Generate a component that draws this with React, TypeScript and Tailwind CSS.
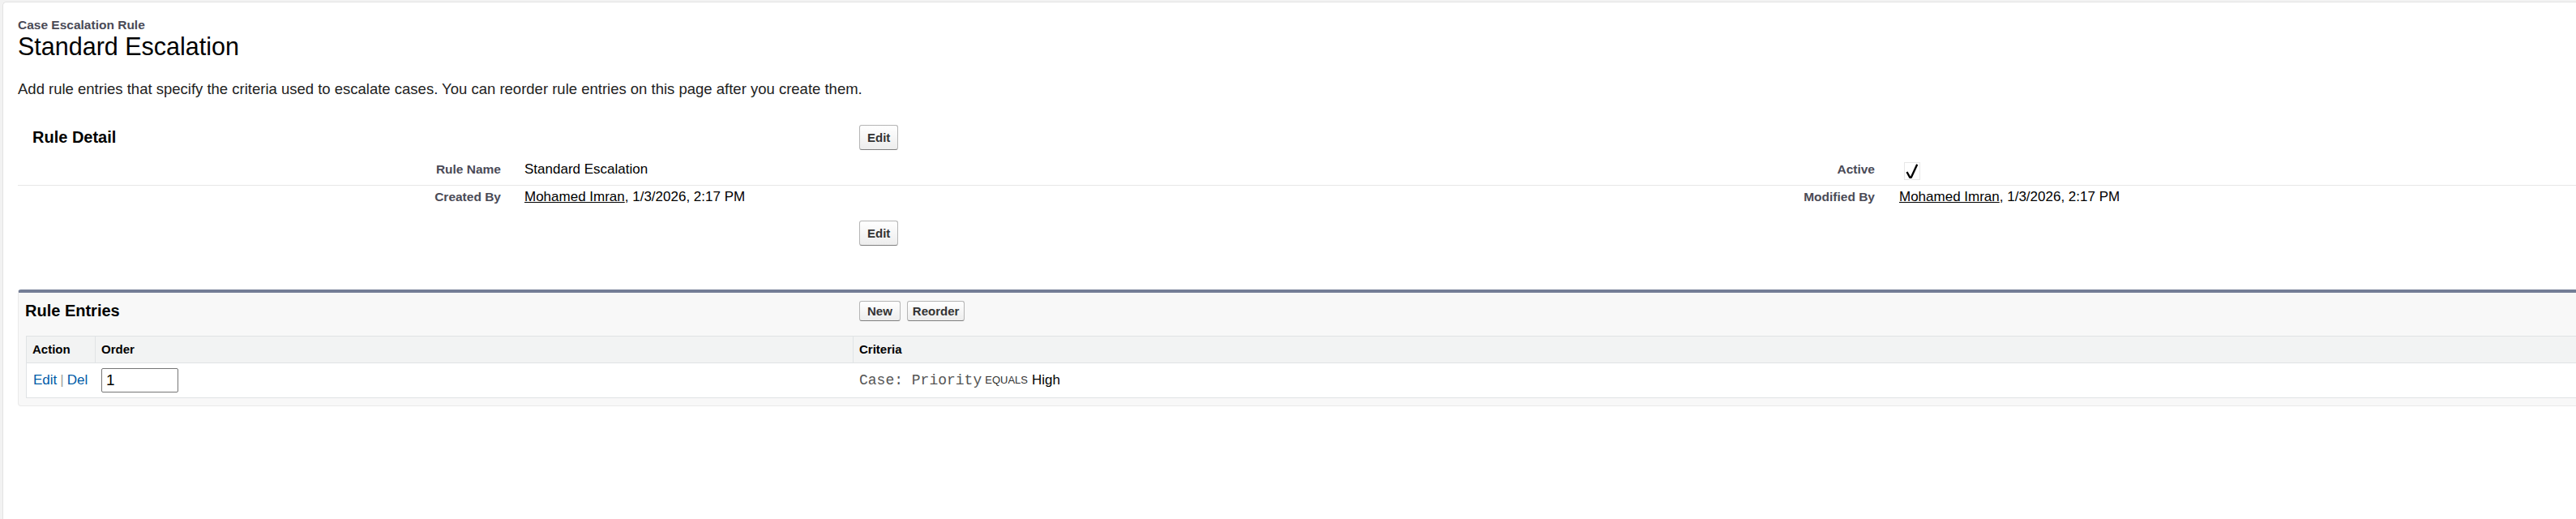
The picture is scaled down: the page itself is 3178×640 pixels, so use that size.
import React from "react"

const Btn = ({ label, className = "" }: { label: string; className?: string }) => (
  <button
    className={`rounded-[3px] border border-[#b5b5b5] border-b-[#7f7f7f] bg-gradient-to-b from-white to-[#ededed] text-[15px] font-bold leading-[17px] text-[#333] ${className}`}
  >
    {label}
  </button>
)

const CheckedBox = () => (
  <svg width="20" height="22" viewBox="0 0 20 22" className="ml-[6px] mt-[4px]">
    <rect x="0.5" y="0.5" width="19" height="21" fill="none" stroke="#cfcfcf" strokeDasharray="1 1" />
    <path d="M3.5 12 L7.2 18.8 L8.8 18.8 L16.2 2.8" fill="none" stroke="#000" strokeWidth="2.4" strokeLinejoin="round" />
  </svg>
)

const User = () => (
  <>
    <a className="text-black underline">Mohamed Imran</a>, 1/3/2026, 2:17 PM
  </>
)

export default function App() {
  return (
    <div className="min-h-[640px] w-full overflow-hidden bg-[#f2f2f2] pl-[3px] pt-[2px] font-['Liberation_Sans',Arial,sans-serif]">
      <div className="min-h-[638px] w-[3500px] rounded-tl-[5px] border-l border-t border-[#e3e3e3] bg-white pl-[18px] pt-[19px]">
        {/* page header */}
        <div className="text-[15.5px] font-bold leading-[18px] text-[#4a4a56]">Case Escalation Rule</div>
        <h1 className="text-[30.5px] leading-[34px] text-black">Standard Escalation</h1>
        <p className="mt-[25px] text-[18.5px] leading-[21px] text-[#222]">
          Add rule entries that specify the criteria used to escalate cases. You can reorder rule entries on this
          page after you create them.
        </p>

        {/* Rule Detail */}
        <div className="mt-[28px]">
          <div className="flex h-[42px] items-center">
            <h2 className="w-[1038px] pl-[18px] text-[20px] font-bold text-black">Rule Detail</h2>
            <Btn label="Edit" className="h-[31px] px-[9px]" />
          </div>

          <div className="grid grid-cols-[610px_1085px_610px_1085px] text-[17px] text-black">
            <div className="flex h-[39px] items-center justify-end border-b border-[#e6e6e6] pr-[14px] text-[15.5px] font-bold text-[#4a4a56]">
              Rule Name
            </div>
            <div className="flex h-[39px] items-center border-b border-[#e6e6e6] pl-[15px]">Standard Escalation</div>
            <div className="flex h-[39px] items-center justify-end border-b border-[#e6e6e6] pr-[14px] text-[15.5px] font-bold text-[#4a4a56]">
              Active
            </div>
            <div className="flex h-[39px] items-center border-b border-[#e6e6e6] pl-[16px]">
              <CheckedBox />
            </div>

            <div className="flex h-[28px] items-center justify-end pr-[14px] text-[15.5px] font-bold text-[#4a4a56]">
              Created By
            </div>
            <div className="flex h-[28px] items-center pl-[15px]">
              <span>
                <User />
              </span>
            </div>
            <div className="flex h-[28px] items-center justify-end pr-[14px] text-[15.5px] font-bold text-[#4a4a56]">
              Modified By
            </div>
            <div className="flex h-[28px] items-center pl-[16px]">
              <span>
                <User />
              </span>
            </div>
          </div>

          <div className="mt-[15px] pl-[1038px]">
            <Btn label="Edit" className="h-[31px] px-[9px]" />
          </div>
        </div>

        {/* Rule Entries related list */}
        <div className="mt-[54px] w-[3460px] rounded-[4px] border-x border-b border-t-4 border-[#eaeaea] border-t-[#747e96] bg-[#f8f8f8] pb-[9px]">
          <div className="flex h-[53px] items-start pt-[10px]">
            <h3 className="w-[1037px] pl-[8px] text-[20px] font-bold leading-[24px] text-black">Rule Entries</h3>
            <div className="flex gap-[8px]">
              <Btn label="New" className="h-[25px] px-[9px]" />
              <Btn label="Reorder" className="h-[25px] px-[6px]" />
            </div>
          </div>

          <div className="ml-[9px] border-l border-t border-[#e0e3e5]">
            <div className="grid grid-cols-[84px_935px_1fr] bg-[#f2f3f3] text-[15px] font-bold text-black">
              <div className="flex h-[33px] items-center border-b border-[#e0e3e5] pl-[7px]">Action</div>
              <div className="flex h-[33px] items-center border-b border-l border-[#e0e3e5] pl-[7px]">Order</div>
              <div className="flex h-[33px] items-center border-b border-l border-[#e0e3e5] pl-[7px]">Criteria</div>
            </div>
            <div className="grid grid-cols-[84px_935px_1fr] bg-white text-[17px]">
              <div className="flex h-[43px] items-center border-b border-[#e0e3e5] pl-[8px]">
                <a className="text-[#015ba7]">Edit</a>
                <span className="px-[4px] text-[#a0a0a0]">|</span>
                <a className="text-[#015ba7]">Del</a>
              </div>
              <div className="flex h-[43px] items-center border-b border-[#e0e3e5] pl-[8px]">
                <input
                  readOnly
                  value="1"
                  className="h-[30px] w-[95px] rounded-[2px] border border-[#767676] bg-white px-[5px] text-[19px] text-black"
                />
              </div>
              <div className="flex h-[43px] items-center border-b border-[#e0e3e5] pl-[8px]">
                <span className="font-['Liberation_Mono',monospace] text-[18px] text-[#555]">Case: Priority</span>
                <span className="ml-[4px] text-[13px] text-[#333]">EQUALS</span>
                <span className="ml-[5px] text-black">High</span>
              </div>
            </div>
          </div>
        </div>
      </div>
    </div>
  )
}
